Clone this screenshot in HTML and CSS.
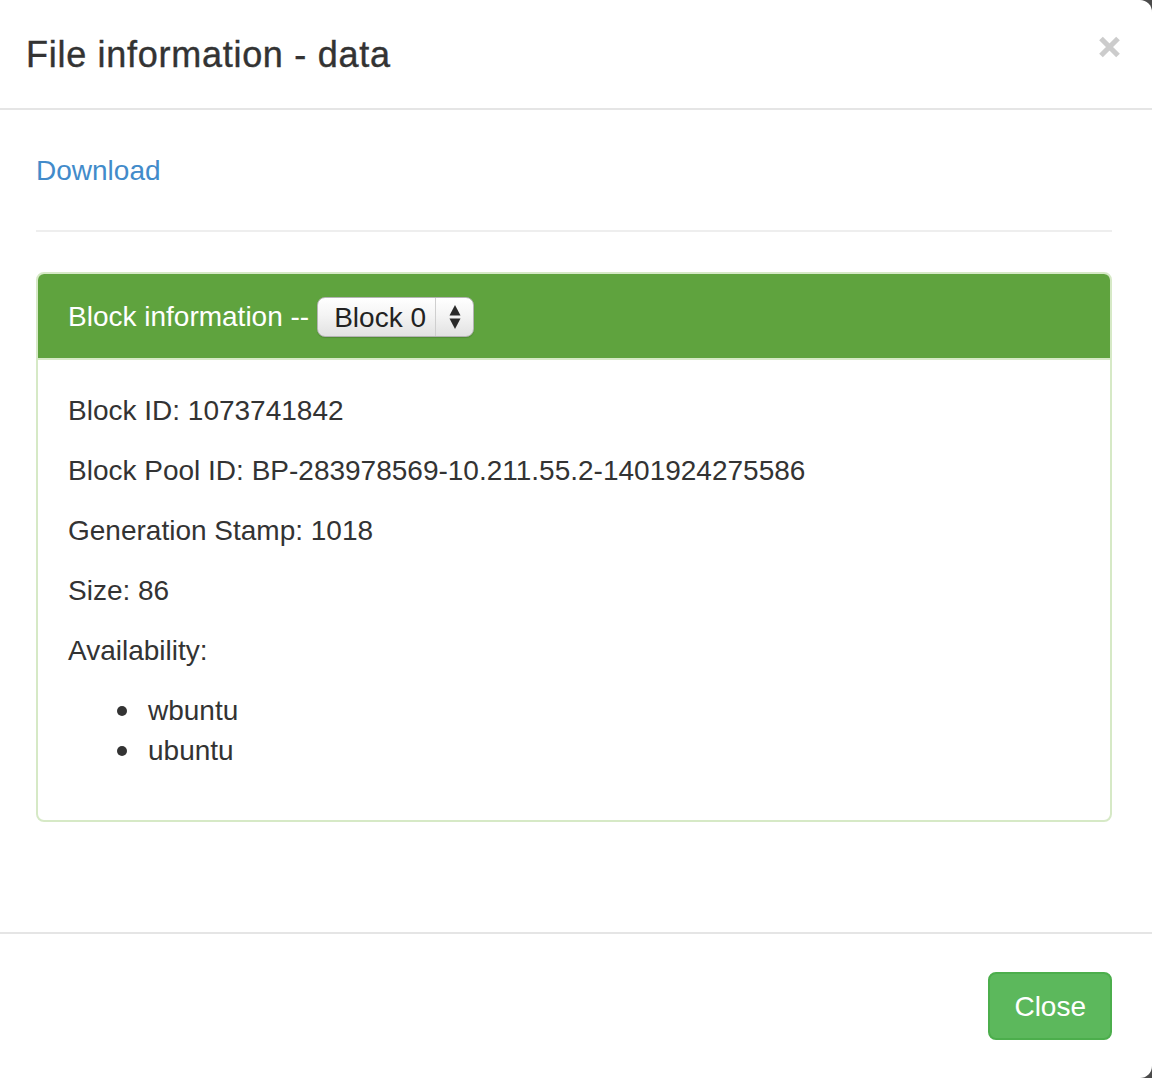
FILE: index.html
```html
<!DOCTYPE html>
<html lang="en">
<head>
<meta charset="utf-8">
<title>File information - data</title>
<link rel="stylesheet" href="styles.css">
</head>
<body>
<div class="modal">
  <div class="modal-header">
    <h4 class="modal-title">File information - data</h4>
    <button class="close" type="button" aria-label="Close">
      <svg width="23" height="22" viewBox="0 0 23 22" aria-hidden="true">
        <path d="M3 2.5 L20 19.5 M20 2.5 L3 19.5" stroke="#cccccc" stroke-width="5.2" fill="none"/>
      </svg>
    </button>
  </div>
  <div class="modal-body">
    <div class="download"><a href="#">Download</a></div>
    <hr class="divider">
    <div class="panel">
      <div class="panel-heading">
        <span class="panel-title">Block information --</span>
        <span class="select">
          <select class="select-input" aria-label="Block">
            <option>Block 0</option>
          </select>
          <span class="select-arrows">
            <svg width="14" height="28" viewBox="0 0 14 28" aria-hidden="true">
              <polygon points="1.5,12.5 7,2 12.5,12.5" fill="#2a2a2a"/>
              <polygon points="1.5,15.5 12.5,15.5 7,26" fill="#2a2a2a"/>
            </svg>
          </span>
        </span>
      </div>
      <div class="panel-body">
        <p class="info">Block ID: 1073741842</p>
        <p class="info">Block Pool ID: BP-283978569-10.211.55.2-1401924275586</p>
        <p class="info">Generation Stamp: 1018</p>
        <p class="info">Size: 86</p>
        <p class="info">Availability:</p>
        <ul class="hosts">
          <li class="host">wbuntu</li>
          <li class="host">ubuntu</li>
        </ul>
      </div>
    </div>
  </div>
  <div class="modal-footer">
    <button class="btn-close" type="button">Close</button>
  </div>
</div>
</body>
</html>
```

FILE: styles.css
```css
html, body {
  margin: 0;
  padding: 0;
}

body {
  background: #4b4b4b;
  font-family: "Liberation Sans", Arial, Helvetica, sans-serif;
  color: #333333;
  font-size: 28px;
  line-height: 40px;
}

.modal {
  background: #ffffff;
  border-radius: 0 12px 12px 0;
  height: 1078px;
  display: flex;
  flex-direction: column;
  overflow: hidden;
  box-sizing: border-box;
}

.modal-header {
  height: 110px;
  box-sizing: border-box;
  padding: 0 31px 0 26px;
  border-bottom: 2px solid #e5e5e5;
  display: flex;
  align-items: center;
  justify-content: space-between;
}

.modal-title {
  margin: 0;
  font-size: 36px;
  font-weight: normal;
  line-height: 52px;
  letter-spacing: 0.72px;
  color: #333333;
  -webkit-text-stroke: 0.4px #333333;
  padding-top: 1px;
}

.close {
  align-self: flex-start;
  margin-top: 36px;
  padding: 0;
  border: 0;
  background: transparent;
  width: 23px;
  height: 22px;
  display: flex;
  cursor: pointer;
}

.modal-body {
  flex: 1;
  padding: 41px 40px 69px 36px;
}

.download {
  line-height: 40px;
}

.download a {
  color: #428bca;
  text-decoration: none;
}

.divider {
  margin: 39px 0 40px;
  border: 0;
  border-top: 2px solid #eeeeee;
  height: 0;
}

.panel {
  border: 2px solid #d6e9c6;
  border-radius: 8px;
  margin-bottom: 40px;
  overflow: hidden;
}

.panel-heading {
  background: #5fa33e;
  color: #ffffff;
  height: 86px;
  box-sizing: border-box;
  padding: 1px 30px 0;
  border-bottom: 2px solid #d6e9c6;
  display: flex;
  align-items: center;
  gap: 8px;
}

.select {
  display: inline-flex;
  align-items: stretch;
  height: 40px;
  box-sizing: border-box;
  border: 1px solid #b4b4b4;
  border-radius: 8px;
  background: linear-gradient(#ffffff 0%, #f4f4f4 45%, #e2e2e2 100%);
  box-shadow: 0 1px 1px rgba(0, 0, 0, 0.15);
  margin-top: 1px;
}

.select-input {
  appearance: none;
  -webkit-appearance: none;
  border: 0;
  background: transparent;
  font-family: inherit;
  font-size: 28px;
  color: #222222;
  width: 117px;
  padding: 0 0 0 16px;
  margin: 0;
  outline: none;
}

.select-arrows {
  width: 37px;
  border-left: 1px solid #cfcfcf;
  display: flex;
  align-items: center;
  justify-content: center;
}

.panel-body {
  padding: 31px 30px 29px;
}

.info {
  margin: 0 0 20px;
}

.hosts {
  margin: 0 0 20px;
  padding-left: 80px;
  list-style: none;
}

.host {
  display: flex;
  align-items: center;
}

.host::before {
  content: "";
  width: 10px;
  height: 10px;
  border-radius: 50%;
  background: #333333;
  margin-left: -31px;
  margin-right: 21px;
  flex: none;
}

.modal-footer {
  border-top: 2px solid #e5e5e5;
  padding: 38px 40px 38px;
  display: flex;
  justify-content: flex-end;
}

.btn-close {
  font-family: inherit;
  font-size: 28px;
  line-height: 40px;
  padding: 13px 24px 11px;
  border: 2px solid #4cae4c;
  background: #5cb85c;
  color: #ffffff;
  border-radius: 8px;
  cursor: pointer;
}
```
